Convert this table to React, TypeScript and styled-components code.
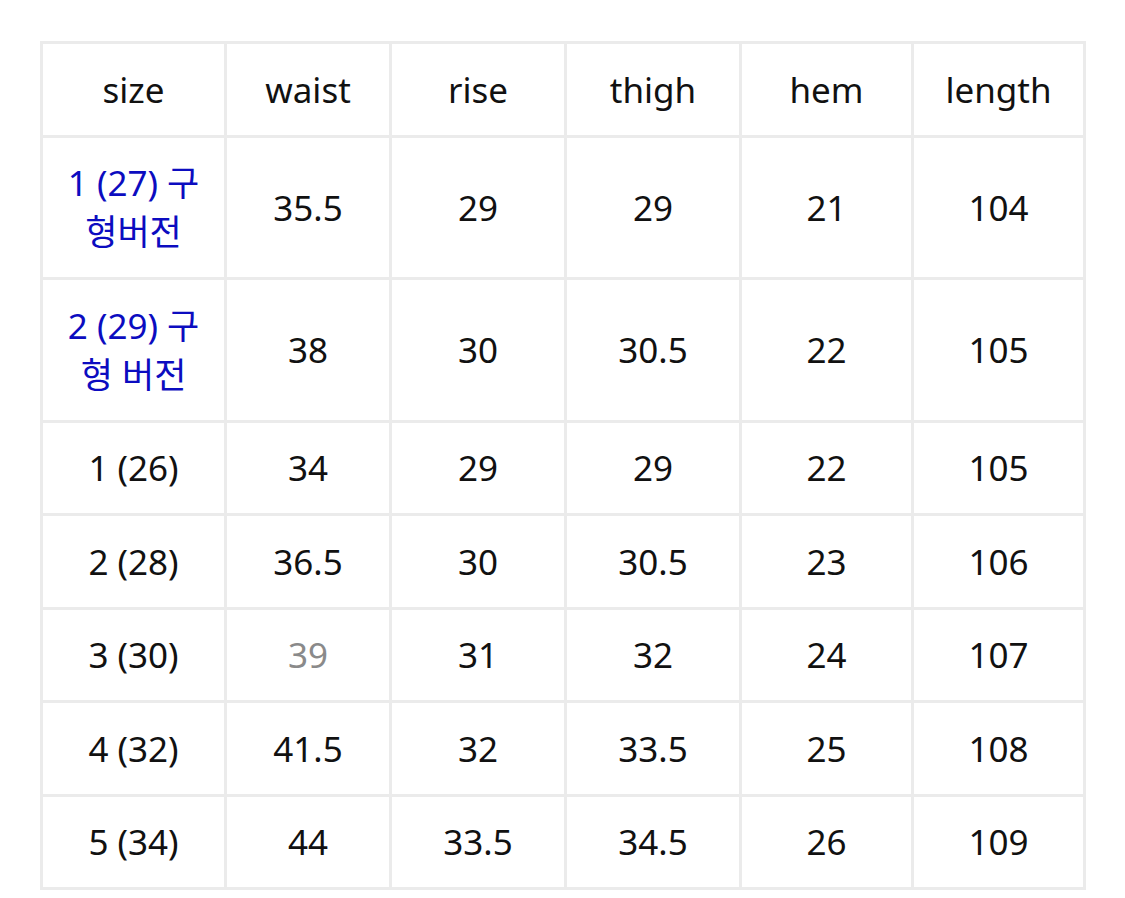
import { createGlobalStyle } from 'styled-components'
import styled from 'styled-components'

const GlobalStyle = createGlobalStyle`
  body {
    margin: 0;
    background: #ffffff;
    font-family: 'Noto Sans', 'Noto Sans CJK KR', sans-serif;
  }
`

const Page = styled.div`
  padding: 41px 40px;
`

const Table = styled.table`
  width: 1043px;
  table-layout: fixed;
  border-collapse: collapse;
  border: 3px solid #ebebeb;
`

const Cell = styled.td<{ $tone?: 'blue' | 'muted' }>`
  border: 3px solid #ebebeb;
  padding: 20.75px 14px;
  text-align: center;
  vertical-align: middle;
  font-size: 35px;
  line-height: 49px;
  color: ${({ $tone }) => ($tone === 'blue' ? '#0c0cc0' : $tone === 'muted' ? '#8a8a8a' : '#111111')};
`

const columns = [184, 165, 175, 175, 172, 172]
const headers = ['size', 'waist', 'rise', 'thigh', 'hem', 'length']

const rows: { size: string; blue?: boolean; values: string[]; muted?: number }[] = [
  { size: '1 (27) 구형버전', blue: true, values: ['35.5', '29', '29', '21', '104'] },
  { size: '2 (29) 구형 버전', blue: true, values: ['38', '30', '30.5', '22', '105'] },
  { size: '1 (26)', values: ['34', '29', '29', '22', '105'] },
  { size: '2 (28)', values: ['36.5', '30', '30.5', '23', '106'] },
  { size: '3 (30)', values: ['39', '31', '32', '24', '107'], muted: 0 },
  { size: '4 (32)', values: ['41.5', '32', '33.5', '25', '108'] },
  { size: '5 (34)', values: ['44', '33.5', '34.5', '26', '109'] },
]

export default function App() {
  return (
    <Page>
      <GlobalStyle />
      <Table>
        <colgroup>
          {columns.map((w, i) => (
            <col key={i} style={{ width: w }} />
          ))}
        </colgroup>
        <tbody>
          <tr>
            {headers.map((h) => (
              <Cell key={h}>{h}</Cell>
            ))}
          </tr>
          {rows.map((r) => (
            <tr key={r.size}>
              <Cell $tone={r.blue ? 'blue' : undefined}>{r.size}</Cell>
              {r.values.map((v, i) => (
                <Cell key={i} $tone={r.muted === i ? 'muted' : undefined}>
                  {v}
                </Cell>
              ))}
            </tr>
          ))}
        </tbody>
      </Table>
    </Page>
  )
}
